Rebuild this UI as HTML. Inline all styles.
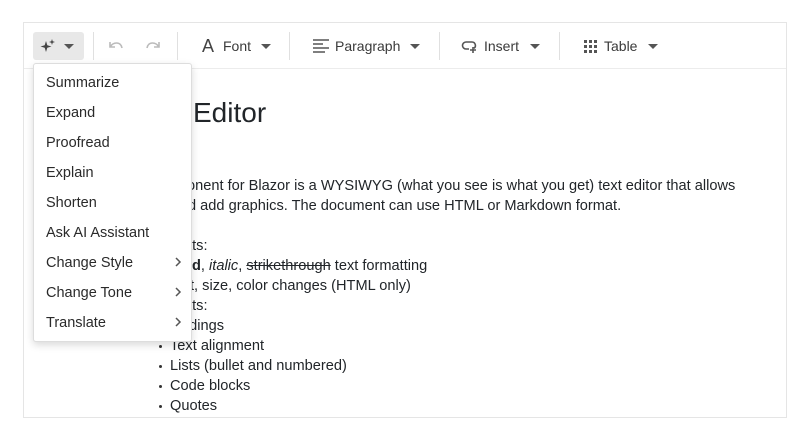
<!DOCTYPE html>
<html><head><meta charset="utf-8"><style>
*{margin:0;padding:0;box-sizing:border-box}
body{width:810px;height:440px;background:#fff;font-family:"Liberation Sans",sans-serif;color:#212529;position:relative;overflow:hidden}
.ed{position:absolute;left:23px;top:22px;width:764px;height:396px;border:1px solid #e5e5e5}
.tb{position:absolute;left:24px;top:23px;width:762px;height:46px;border-bottom:1px solid #ececec}
.sep{position:absolute;top:32px;width:1px;height:28px;background:#e0e0e0}
.t{position:absolute;font-size:14px;color:#3a3a3a;line-height:16px}
.car{position:absolute;width:0;height:0;border-left:5px solid transparent;border-right:5px solid transparent;border-top:5px solid #555}
.ln{position:absolute;font-size:14.6px;line-height:20px;white-space:nowrap;color:#212529}
.b{position:absolute;left:159px;width:3px;height:3px;background:#333;border-radius:50%}
.menu{position:absolute;left:33px;top:63px;width:159px;height:279px;background:#fff;border:1px solid #ddd;border-radius:3px;box-shadow:0 3px 8px rgba(0,0,0,.15);z-index:5}
.mi{position:absolute;left:12px;font-size:14.5px;color:#2a2a2a;line-height:16px}
.chev{position:absolute;left:140px}
</style></head><body>
<div class="ed"></div>
<div class="tb"></div>
<div style="position:absolute;left:33px;top:32px;width:51px;height:28px;background:#e8e8e8;border-radius:3px"></div>
<svg style="position:absolute;left:38px;top:37px" width="20" height="18" viewBox="0 0 20 18"><path d="M8 4 L9.3 8.2 L13.5 9.5 L9.3 10.8 L8 15 L6.7 10.8 L2.5 9.5 L6.7 8.2Z" fill="#444"/><path d="M14 2 L14.7 4.3 L17 5 L14.7 5.7 L14 8 L13.3 5.7 L11 5 L13.3 4.3Z" fill="#444"/></svg>
<div class="car" style="left:64px;top:44px"></div>
<div class="sep" style="left:93px"></div>
<svg style="position:absolute;left:107px;top:38px" width="18" height="16" viewBox="0 0 18 16"><path d="M3 4v5h5M3.5 8.5C5 6 7 5 9.5 5c3 0 5 2 5.5 5" fill="none" stroke="#bbb" stroke-width="1.6"/></svg>
<svg style="position:absolute;left:144px;top:38px" width="18" height="16" viewBox="0 0 18 16"><path d="M15 4v5h-5M14.5 8.5C13 6 11 5 8.5 5c-3 0-5 2-5.5 5" fill="none" stroke="#bbb" stroke-width="1.6"/></svg>
<div class="sep" style="left:177px"></div>
<div class="t" style="left:202px;top:37px;font-size:18px;line-height:18px;color:#444">A</div>
<div class="t" style="left:223px;top:38px">Font</div>
<div class="car" style="left:261px;top:44px"></div>
<div class="sep" style="left:289px"></div>
<svg style="position:absolute;left:312px;top:38px" width="18" height="16" viewBox="0 0 18 16"><path d="M1 2h16M1 6h10M1 10h16M1 14h12" stroke="#555" stroke-width="1.6"/></svg>
<div class="t" style="left:335px;top:38px">Paragraph</div>
<div class="car" style="left:410px;top:44px"></div>
<div class="sep" style="left:439px"></div>
<svg style="position:absolute;left:461px;top:38px" width="18" height="16" viewBox="0 0 18 16"><path d="M8 11H5a3.5 3.5 0 0 1 0-7h6a3.5 3.5 0 0 1 2 6.3M12 9v6M9 12h6" fill="none" stroke="#555" stroke-width="1.6"/></svg>
<div class="t" style="left:484px;top:38px">Insert</div>
<div class="car" style="left:530px;top:44px"></div>
<div class="sep" style="left:559px"></div>
<svg style="position:absolute;left:584px;top:40px" width="13" height="13" viewBox="0 0 13 13" fill="#555"><rect x="0" y="0" width="3" height="3"/><rect x="5" y="0" width="3" height="3"/><rect x="10" y="0" width="3" height="3"/><rect x="0" y="5" width="3" height="3"/><rect x="5" y="5" width="3" height="3"/><rect x="10" y="5" width="3" height="3"/><rect x="0" y="10" width="3" height="3"/><rect x="5" y="10" width="3" height="3"/><rect x="10" y="10" width="3" height="3"/></svg>
<div class="t" style="left:604px;top:38px">Table</div>
<div class="car" style="left:648px;top:44px"></div>

<div class="ln" style="left:193px;top:96px;font-size:28px;line-height:34px;font-weight:500">Editor</div>
<div class="ln" style="left:187px;top:176px">onent for Blazor is a WYSIWYG (what you see is what you get) text editor that allows</div>
<div class="ln" style="left:188px;top:196px">d add graphics. The document can use HTML or Markdown format.</div>
<div class="ln" style="left:184px;top:236px">ats:</div>
<div class="ln" style="left:192px;top:256px"><b>d</b>, <i>italic</i>, <s>strikethrough</s> text formatting</div>
<div class="ln" style="left:190px;top:276px">t, size, color changes (HTML only)</div>
<div class="ln" style="left:184px;top:296px">ats:</div>
<div class="ln" style="left:181px;top:316px">adings</div>
<div class="b" style="top:325px"></div>
<div class="b" style="top:345px"></div><div class="ln" style="left:170px;top:336px">Text alignment</div>
<div class="b" style="top:365px"></div><div class="ln" style="left:170px;top:356px">Lists (bullet and numbered)</div>
<div class="b" style="top:385px"></div><div class="ln" style="left:170px;top:376px">Code blocks</div>
<div class="b" style="top:405px"></div><div class="ln" style="left:170px;top:396px">Quotes</div>

<div class="menu">
<div class="mi" style="top:11px">Summarize</div>
<div class="mi" style="top:41px">Expand</div>
<div class="mi" style="top:71px">Proofread</div>
<div class="mi" style="top:101px">Explain</div>
<div class="mi" style="top:131px">Shorten</div>
<div class="mi" style="top:161px">Ask AI Assistant</div>
<div class="mi" style="top:191px">Change Style</div>
<div class="mi" style="top:221px">Change Tone</div>
<div class="mi" style="top:251px">Translate</div>
<svg class="chev" style="top:192px" width="8" height="12" viewBox="0 0 8 12"><path d="M2 2l4 4-4 4" fill="none" stroke="#555" stroke-width="1.5"/></svg>
<svg class="chev" style="top:222px" width="8" height="12" viewBox="0 0 8 12"><path d="M2 2l4 4-4 4" fill="none" stroke="#555" stroke-width="1.5"/></svg>
<svg class="chev" style="top:252px" width="8" height="12" viewBox="0 0 8 12"><path d="M2 2l4 4-4 4" fill="none" stroke="#555" stroke-width="1.5"/></svg>
</div>
</body></html>
